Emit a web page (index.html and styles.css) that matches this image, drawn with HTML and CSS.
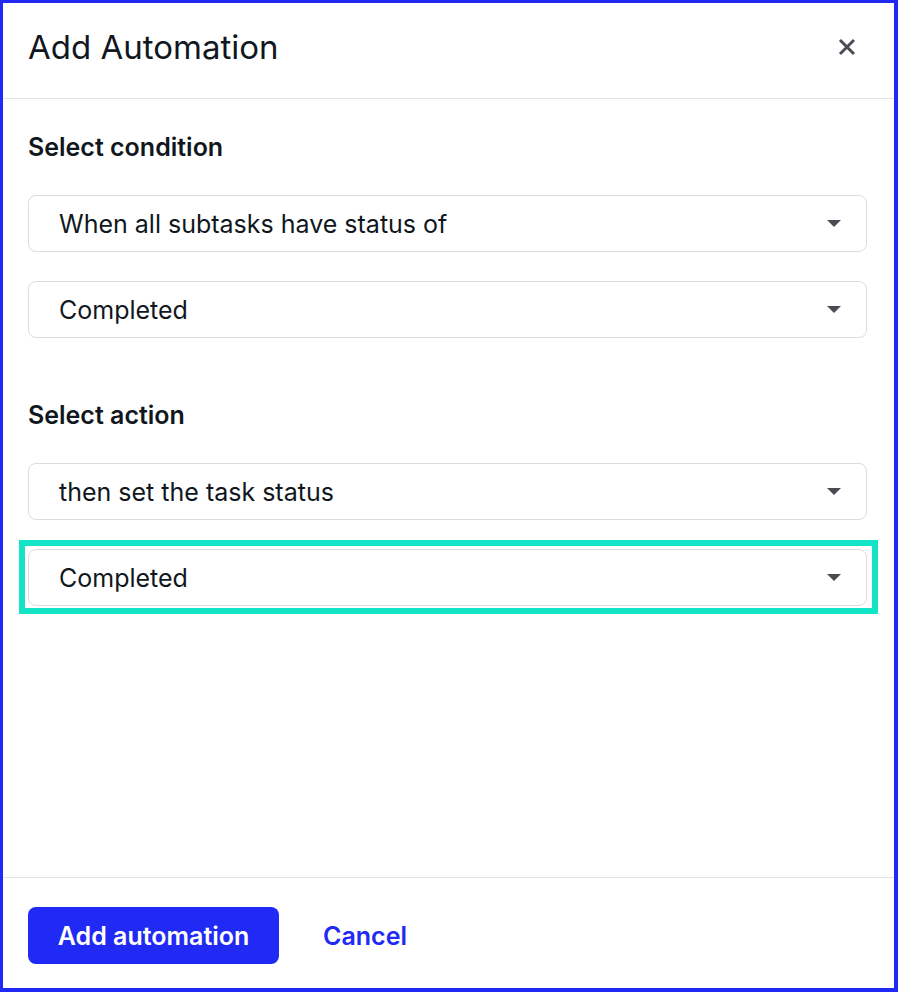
FILE: index.html
```html
<!DOCTYPE html>
<html>
<head>
  <title>Add Automation</title>
  <link rel="stylesheet" href="styles.css">
</head>
<body>
<div class="modal">
  <div class="modalHeader">
    <h2 class="modalTitle">Add Automation</h2>
    <button class="closeBtn" aria-label="Close">
      <svg width="18" height="18" viewBox="0 0 18 18">
        <path d="M2 2 L16 16 M16 2 L2 16" stroke="#4d4e55" stroke-width="3" fill="none"/>
      </svg>
    </button>
  </div>

  <div class="modalBody">
    <h3 class="sectionTitle">Select condition</h3>
    <div class="dropdown">
      <span>When all subtasks have status of</span>
      <span class="caret"></span>
    </div>
    <div class="dropdown">
      <span>Completed</span>
      <span class="caret"></span>
    </div>

    <h3 class="sectionTitle second">Select action</h3>
    <div class="dropdown">
      <span>then set the task status</span>
      <span class="caret"></span>
    </div>
    <div class="highlight">
      <div class="dropdown">
        <span>Completed</span>
        <span class="caret"></span>
      </div>
    </div>
  </div>

  <div class="modalFooter">
    <button class="primaryBtn">Add automation</button>
    <button class="linkBtn">Cancel</button>
  </div>
</div>
</body>
</html>
```

FILE: styles.css
```css
body {
    margin: 0;
    background: #fff;
    font-family: 'Inter', 'Noto Sans', sans-serif;
    color: #111720;
}
.modal {
    width: 898px;
    height: 992px;
    box-sizing: border-box;
    border-style: solid;
    border-color: #2129f5;
    border-width: 3px 4px 4px 3px;
    display: flex;
    flex-direction: column;
    background: #fff;
}
.modalHeader {
    display: flex;
    align-items: center;
    justify-content: space-between;
    padding: 24px 38px 31px 25px;
    border-bottom: 1px solid #e3e3e3;
}
.modalTitle {
    margin: 0;
    font-size: 33px;
    line-height: 40px;
    font-weight: 400;
}
.closeBtn {
    border: none;
    background: none;
    padding: 0;
    width: 18px;
    height: 18px;
    cursor: pointer;
    display: flex;
}
.modalBody {
    flex: 1;
    padding: 33px 27px 0 25px;
}
.sectionTitle {
    margin: 0 0 33px 0;
    font-size: 25px;
    line-height: 30px;
    font-weight: 600;
}
.sectionTitle.second {
    margin-top: 62px;
}
.dropdown {
    height: 57px;
    box-sizing: border-box;
    border: 1px solid #dcdcdc;
    border-radius: 8px;
    display: flex;
    align-items: center;
    justify-content: space-between;
    padding: 0 25px 0 30px;
    font-size: 25px;
    margin-bottom: 29px;
    background: #fff;
}
.caret {
    width: 0;
    height: 0;
    border-left: 7.5px solid transparent;
    border-right: 7.5px solid transparent;
    border-top: 7px solid #4b4c53;
}
.highlight {
    border: 6px solid #14e4c6;
    padding: 3px 5px 2px 3px;
    margin: -9px -11px 0 -9px;
}
.highlight .dropdown {
    margin-bottom: 0;
}
.modalFooter {
    display: flex;
    align-items: center;
    border-top: 1px solid #e3e3e3;
    padding: 29px 25px 24px 25px;
}
.primaryBtn {
    height: 57px;
    width: 251px;
    border: none;
    border-radius: 8px;
    background: #2129f5;
    color: #fff;
    font-family: inherit;
    font-size: 25px;
    font-weight: 600;
    cursor: pointer;
}
.linkBtn {
    margin-left: 44px;
    border: none;
    background: none;
    padding: 0;
    color: #2129f5;
    font-family: inherit;
    font-size: 25px;
    font-weight: 600;
    cursor: pointer;
}
```
